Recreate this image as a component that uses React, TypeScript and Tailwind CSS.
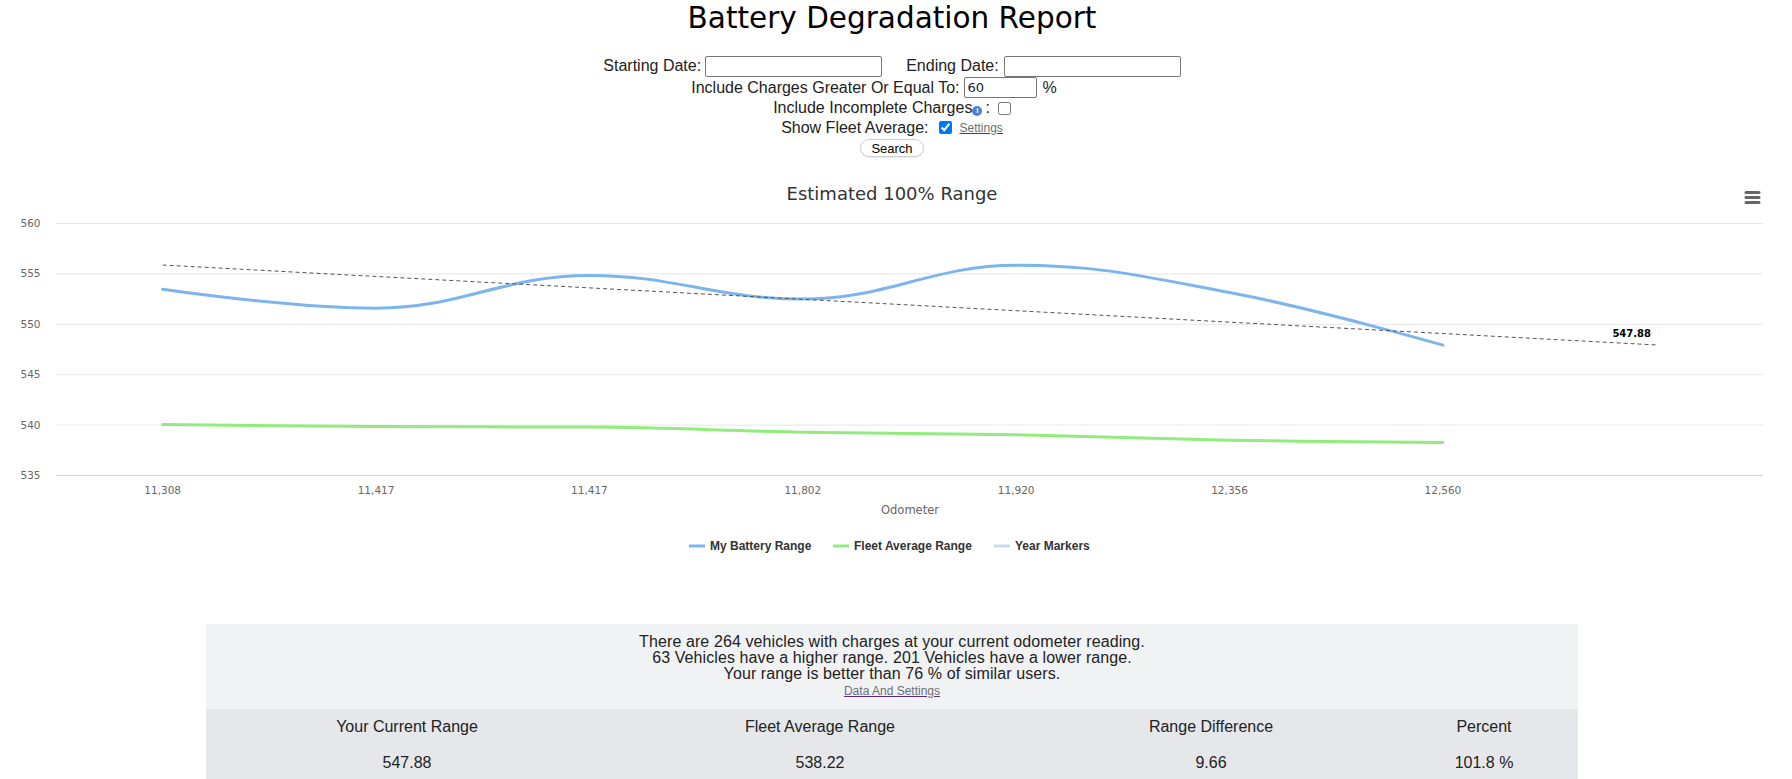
import React from 'react'

type Pt = { x: number; y: number; rcx?: number; rcy?: number }

// chart geometry (svg coords)
const PLOT_LEFT = 56
const PLOT_RIGHT = 1763
const CAT_W = (PLOT_RIGHT - PLOT_LEFT) / 8
const TOP = 49
const PER_UNIT = 10.08
const yOf = (v: number) => TOP + (560 - v) * PER_UNIT
const xOf = (i: number) => PLOT_LEFT + CAT_W * (i + 0.5)

const categories = ['11,308', '11,417', '11,417', '11,802', '11,920', '12,356', '12,560']
const myRange = [553.42, 551.55, 554.8, 552.45, 555.8, 553.1, 547.88]
const fleetRange = [540.0, 539.8, 539.75, 539.25, 539.0, 538.45, 538.22]

// highcharts-style spline path
function splinePath(values: number[]) {
  const pts: Pt[] = values.map((v, i) => ({ x: xOf(i), y: yOf(v) }))
  const smoothing = 1.5
  const denom = smoothing + 1
  let d = `M ${pts[0].x} ${pts[0].y}`
  for (let i = 1; i < pts.length; i++) {
    const p = pts[i]
    const last = pts[i - 1]
    const next = pts[i + 1]
    let lcx = p.x
    let lcy = p.y
    if (next) {
      lcx = (smoothing * p.x + last.x) / denom
      lcy = (smoothing * p.y + last.y) / denom
      const rcx = (smoothing * p.x + next.x) / denom
      let rcy = (smoothing * p.y + next.y) / denom
      let corr = 0
      if (rcx !== lcx) corr = ((rcy - lcy) * (rcx - p.x)) / (rcx - lcx) + p.y - rcy
      lcy += corr
      rcy += corr
      if (lcy > last.y && lcy > p.y) {
        lcy = Math.max(last.y, p.y)
        rcy = 2 * p.y - lcy
      } else if (lcy < last.y && lcy < p.y) {
        lcy = Math.min(last.y, p.y)
        rcy = 2 * p.y - lcy
      }
      if (rcy > next.y && rcy > p.y) {
        rcy = Math.max(next.y, p.y)
        lcy = 2 * p.y - rcy
      } else if (rcy < next.y && rcy < p.y) {
        rcy = Math.min(next.y, p.y)
        lcy = 2 * p.y - rcy
      }
      p.rcx = rcx
      p.rcy = rcy
    }
    d += ` C ${last.rcx ?? last.x} ${last.rcy ?? last.y} ${lcx} ${lcy} ${p.x} ${p.y}`
  }
  return d
}

function RangeChart() {
  const ticks = [560, 555, 550, 545, 540, 535]
  return (
    <svg width={1784} height={400} className="block" style={{ fontFamily: '"DejaVu Sans", sans-serif' }}>
      <text x={892} y={26} textAnchor="middle" fontSize={18} fill="#333333">
        Estimated 100% Range
      </text>

      {/* context menu */}
      <g stroke="#666666" strokeWidth={3} strokeLinecap="round">
        <line x1={1746} y1={18.5} x2={1759} y2={18.5} />
        <line x1={1746} y1={23.5} x2={1759} y2={23.5} />
        <line x1={1746} y1={28.5} x2={1759} y2={28.5} />
      </g>

      {ticks.map((t) => (
        <g key={t}>
          {t !== 535 && (
            <line x1={PLOT_LEFT} x2={PLOT_RIGHT} y1={yOf(t) + 0.5} y2={yOf(t) + 0.5} stroke="#e6e6e6" />
          )}
          <text x={40.5} y={yOf(t) + 4} textAnchor="end" fontSize={10.5} fill="#666666">
            {t}
          </text>
        </g>
      ))}
      <line x1={PLOT_LEFT} x2={PLOT_RIGHT} y1={yOf(535) + 0.5} y2={yOf(535) + 0.5} stroke="#ccd6eb" />

      {categories.map((c, i) => (
        <text key={i} x={xOf(i)} y={320} textAnchor="middle" fontSize={10.5} fill="#666666">
          {c}
        </text>
      ))}
      <text x={910} y={340} textAnchor="middle" fontSize={11.5} fill="#666666">
        Odometer
      </text>

      <path d={splinePath(fleetRange)} fill="none" stroke="#90ed7d" strokeWidth={3} strokeLinecap="round" />
      <path d={splinePath(myRange)} fill="none" stroke="#7cb5ec" strokeWidth={3} strokeLinecap="round" />

      {/* trend line */}
      <line
        x1={xOf(0)}
        y1={yOf(555.83)}
        x2={xOf(7)}
        y2={yOf(547.9)}
        stroke="#555555"
        strokeWidth={1}
        strokeDasharray="4 3"
      />
      <text
        x={1651}
        y={163}
        textAnchor="end"
        fontSize={10}
        fontWeight="bold"
        fill="#000000"
        stroke="#ffffff"
        strokeWidth={2}
        paintOrder="stroke"
        strokeLinejoin="round"
      >
        547.88
      </text>

      {/* legend */}
      <g fontFamily='"Liberation Sans", Arial, sans-serif' fontSize={12} fontWeight="bold" fill="#333333">
        <line x1={689} x2={705} y1={372} y2={372} stroke="#7cb5ec" strokeWidth={3} />
        <text x={710} y={376}>My Battery Range</text>
        <line x1={833} x2={849} y1={372} y2={372} stroke="#90ed7d" strokeWidth={3} />
        <text x={854} y={376}>Fleet Average Range</text>
        <line x1={994} x2={1010} y1={372} y2={372} stroke="#c6dcf2" strokeWidth={3} />
        <text x={1015} y={376}>Year Markers</text>
      </g>
    </svg>
  )
}

export default function App() {
  return (
    <div className="min-h-screen bg-white text-black font-['Liberation_Sans',Arial,sans-serif]">
      <div className="w-[1784px]">
        <h1 className="mt-[4px] text-center text-[29.5px] leading-[28px] font-normal font-['DejaVu_Sans',sans-serif] text-black">
          Battery Degradation Report
        </h1>

        <form className="mt-[23px] text-[16px] text-[#222]" onSubmit={(e) => e.preventDefault()}>
          <div className="flex h-[22px] items-center justify-center">
            <span>Starting Date:</span>
            <input className="ml-[4px] h-[21px] w-[177px] rounded-[2px] border border-[#767676] bg-white" />
            <span className="ml-[24px]">Ending Date:</span>
            <input className="ml-[5px] h-[21px] w-[177px] rounded-[2px] border border-[#767676] bg-white" />
          </div>
          <div className="flex h-[21px] items-center justify-center pr-[36px]">
            <span>Include Charges Greater Or Equal To:</span>
            <input
              defaultValue="60"
              className="ml-[4px] h-[21px] w-[73px] rounded-[2px] border border-[#767676] bg-white px-[3px] text-[13px] font-['DejaVu_Sans',sans-serif]"
            />
            <span className="ml-[6px]">%</span>
          </div>
          <div className="flex h-[20px] items-center justify-center">
            <span>Include Incomplete Charges</span>
            <span className="mt-[5px] flex h-[10px] w-[10px] items-center justify-center rounded-full bg-[#4f7fdc] text-[8px] font-bold leading-none text-white">
              i
            </span>
            <span className="ml-[3px]">:</span>
            <input type="checkbox" className="ml-[8px] h-[13px] w-[13px]" />
          </div>
          <div className="flex h-[19px] items-center justify-center">
            <span>Show Fleet Average:</span>
            <input type="checkbox" defaultChecked className="ml-[10px] h-[13px] w-[13px] accent-[#0075ff]" />
            <a href="#" className="ml-[8px] text-[12px] text-[#6c6f75] underline decoration-[#5b2c8f]">
              Settings
            </a>
          </div>
          <div className="mt-[2px] flex justify-center">
            <button className="h-[18px] w-[64px] rounded-full border border-[#cfcfcf] bg-white text-[13px] leading-none text-black shadow-[0_1px_1px_rgba(0,0,0,0.08)]">
              Search
            </button>
          </div>
        </form>

        <div className="mt-[17px]">
          <RangeChart />
        </div>
      </div>

      <div className="ml-[206px] mt-[50px] w-[1372px] text-[16px] text-[#222]">
        <div className="bg-[#f1f2f4] py-[10px] text-center leading-[16px] tracking-[0.1px]">
          <p>There are 264 vehicles with charges at your current odometer reading.</p>
          <p>63 Vehicles have a higher range. 201 Vehicles have a lower range.</p>
          <p>Your range is better than 76 % of similar users.</p>
          <a href="#" className="text-[12px] tracking-normal text-[#6c6f75] underline decoration-[#5b2c8f]">
            Data And Settings
          </a>
        </div>
        <div className="bg-[#e5e7eb]">
          <div className="grid h-[36px] grid-cols-[402px_424px_358px_188px] items-center text-center">
            <span>Your Current Range</span>
            <span>Fleet Average Range</span>
            <span>Range Difference</span>
            <span>Percent</span>
          </div>
          <div className="grid h-[36px] grid-cols-[402px_424px_358px_188px] items-center text-center">
            <span>547.88</span>
            <span>538.22</span>
            <span>9.66</span>
            <span>101.8 %</span>
          </div>
        </div>
      </div>
    </div>
  )
}
